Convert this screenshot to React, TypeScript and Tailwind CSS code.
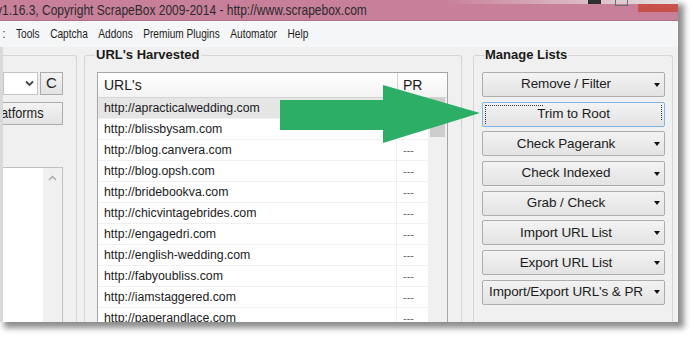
import React from 'react';

const urls = [
  'http://apracticalwedding.com',
  'http://blissbysam.com',
  'http://blog.canvera.com',
  'http://blog.opsh.com',
  'http://bridebookva.com',
  'http://chicvintagebrides.com',
  'http://engagedri.com',
  'http://english-wedding.com',
  'http://fabyoubliss.com',
  'http://iamstaggered.com',
  'http://paperandlace.com',
];

const actions = [
  { label: 'Remove / Filter', arrow: true },
  { label: 'Trim to Root', arrow: false, focused: true },
  { label: 'Check Pagerank', arrow: true },
  { label: 'Check Indexed', arrow: true },
  { label: 'Grab / Check', arrow: true },
  { label: 'Import URL List', arrow: true },
  { label: 'Export URL List', arrow: true },
  { label: "Import/Export URL's & PR", arrow: true },
];

function ActionButton({ label, arrow, focused }: { label: string; arrow: boolean; focused?: boolean }) {
  return (
    <div
      className={`relative flex h-[25px] items-center rounded-[2px] border bg-gradient-to-b from-[#f3f3f3] to-[#e3e3e3] text-[13.5px] text-[#1c1c1c] ${
        focused ? 'border-[#7eb4ea]' : 'border-[#adadad]'
      }`}
    >
      {focused && (
        <>
          {/* focus rectangle */}
          <div className="absolute left-[2px] top-[2px] h-[19px] border-l border-dotted border-[#333]" />
          <div className="absolute right-[2px] top-[2px] h-[15px] border-r border-dotted border-[#333]" />
          <div className="absolute left-[2px] top-[2px] w-[58px] border-t border-dotted border-[#333]" />
        </>
      )}
      <span className="flex-1 whitespace-nowrap text-center tracking-[-0.1px]">{label}</span>
      {arrow && (
        <span className="flex w-[15px] justify-center">
          <span className="h-0 w-0 border-x-[3.5px] border-t-[4px] border-x-transparent border-t-[#111]" />
        </span>
      )}
    </div>
  );
}

export default function App() {
  return (
    <div className="min-h-[338px] w-[694px] bg-white" style={{ fontFamily: '"Liberation Sans", Arial, sans-serif' }}>
      <div className="relative h-[322px] w-[678px] overflow-hidden bg-[#f0f0f0] shadow-[5px_5px_6px_1px_rgba(0,0,0,0.45)]">
        {/* Title bar */}
        <div className="relative h-[21px] border-b border-[#b06f87] bg-[#c8809a]">
          <div className="ml-[-4px] origin-left scale-x-[0.8] whitespace-nowrap text-[15px] leading-[19px] text-[#2b2b2b]">
            v1.16.3, Copyright ScrapeBox 2009-2014 - http://www.scrapebox.com
          </div>
          <div className="absolute left-[445px] right-0 top-0 h-[4px] bg-gradient-to-r from-[#c8809a] to-[#e4e4e4]" />
          <div className="absolute left-[588px] top-0 h-[4px] w-[13px] bg-[#2f2f2f]" />
          <div className="absolute left-[615px] top-[-6px] h-[12px] w-[13px] border border-[#6e6e6e]" />
          <div className="absolute left-[638px] top-[4px] h-[8px] w-[40px] bg-[#c9514b]" />
        </div>

        {/* Menu bar */}
        <div className="flex h-[26px] items-center whitespace-nowrap bg-[#f5f6f7] text-[13.5px] text-[#1e1e1e]">
          <span className="ml-[2px] text-[#555]">:</span>
          <div className="ml-[10px] flex origin-left scale-x-[0.75] gap-[14px]">
            <span>Tools</span>
            <span>Captcha</span>
            <span>Addons</span>
            <span>Premium Plugins</span>
            <span>Automator</span>
            <span>Help</span>
          </div>
        </div>

        {/* Body */}
        <div className="flex h-[275px]">
          <div className="w-[3px] bg-[#d9d9d9]" />

          {/* Left group (cut off) */}
          <div className="mt-[8px] w-[74px] rounded-tr-[3px] border-r border-t border-[#d5d5d5] pr-[13px] pt-[16px]">
            <div className="flex gap-[2px]">
              <div className="flex h-[23px] w-[35px] items-center justify-end border border-[#c4c4c4] bg-white pr-[3px]">
                <svg width="9" height="7" viewBox="0 0 9 7">
                  <polyline points="1,1.5 4.5,5 8,1.5" fill="none" stroke="#444" strokeWidth="1.8" />
                </svg>
              </div>
              <div className="flex h-[23px] w-[23px] items-center justify-center border border-[#adadad] bg-gradient-to-b from-[#f3f3f3] to-[#e3e3e3] text-[15px] text-[#222]">
                C
              </div>
            </div>
            <div className="mt-[7px] flex h-[23px] items-center overflow-hidden border border-l-0 border-[#adadad] bg-gradient-to-b from-[#f3f3f3] to-[#e3e3e3] text-[15px] text-[#222]">
              <span className="ml-[-2px] origin-left scale-x-[0.85] whitespace-nowrap">atforms</span>
            </div>
            <div className="mt-[42px] flex h-[200px] border-r border-t border-[#c0c0c0] bg-white">
              <div className="flex-1" />
              <div className="flex w-[19px] justify-center bg-[#f0f0f0] pt-[7px]">
                <svg width="9" height="6" viewBox="0 0 9 6">
                  <polyline points="1,5 4.5,1.5 8,5" fill="none" stroke="#a6a6a6" strokeWidth="1.4" />
                </svg>
              </div>
            </div>
          </div>

          {/* URL's Harvested */}
          <div className="ml-[7px] mt-[8px] w-[378px] rounded-t-[3px] border-x border-t border-[#d5d5d5]">
            <div className="-mt-[9px] ml-[10px] w-fit bg-[#f0f0f0] px-[1px] text-[13px] font-bold leading-[16px] text-[#1a1a1a]">
              URL's Harvested
            </div>
            <div className="ml-[12px] mt-[9px] w-[351px] border border-[#a5a5a5] bg-white">
              <div className="flex h-[25px] border-b border-[#d5d5d5] bg-gradient-to-b from-white to-[#f3f3f3] text-[14px] text-[#1a1a1a]">
                <div className="flex w-[300px] items-center border-r border-[#d5d5d5] pl-[6px]">URL's</div>
                <div className="flex flex-1 items-center pl-[5px]">PR</div>
              </div>
              <div className="flex">
                <div className="w-[330px]">
                  {urls.map((u, i) => (
                    <div key={u} className="flex h-[21px] border-b border-[#f0f0f0] text-[12.3px] text-[#1b1b24]">
                      <div className={`flex w-[299px] items-center border-r border-[#f0f0f0] pl-[6px] ${i === 0 ? 'bg-[#e5e5e5]' : ''}`}>
                        {u}
                      </div>
                      <div className="flex flex-1 items-center pl-[6px] text-[11px] text-[#666]">---</div>
                    </div>
                  ))}
                </div>
                <div className="w-[19px] bg-[#f0f0f0] pl-[2px]">
                  <div className="h-[39px] w-[15px] bg-[#cdcdcd]" />
                </div>
              </div>
            </div>
          </div>

          {/* Manage Lists */}
          <div className="ml-[11px] mt-[8px] w-[200px] rounded-t-[3px] border-x border-t border-[#d5d5d5]">
            <div className="-mt-[9px] ml-[10px] w-fit bg-[#f0f0f0] px-[1px] text-[13px] font-bold leading-[16px] text-[#1a1a1a]">
              Manage Lists
            </div>
            <div className="ml-[8px] mt-[9px] flex w-[183px] flex-col gap-[4.7px]">
              {actions.map((a) => (
                <ActionButton key={a.label} label={a.label} arrow={a.arrow} focused={a.focused} />
              ))}
            </div>
          </div>
        </div>

        {/* Annotation arrow */}
        <svg className="absolute left-[280px] top-[85px]" width="200" height="58" viewBox="0 0 200 58">
          <polygon points="0,15 103,15 103,0 200,28 103,58 103,45 0,45" fill="#2dae66" />
        </svg>
      </div>
    </div>
  );
}
